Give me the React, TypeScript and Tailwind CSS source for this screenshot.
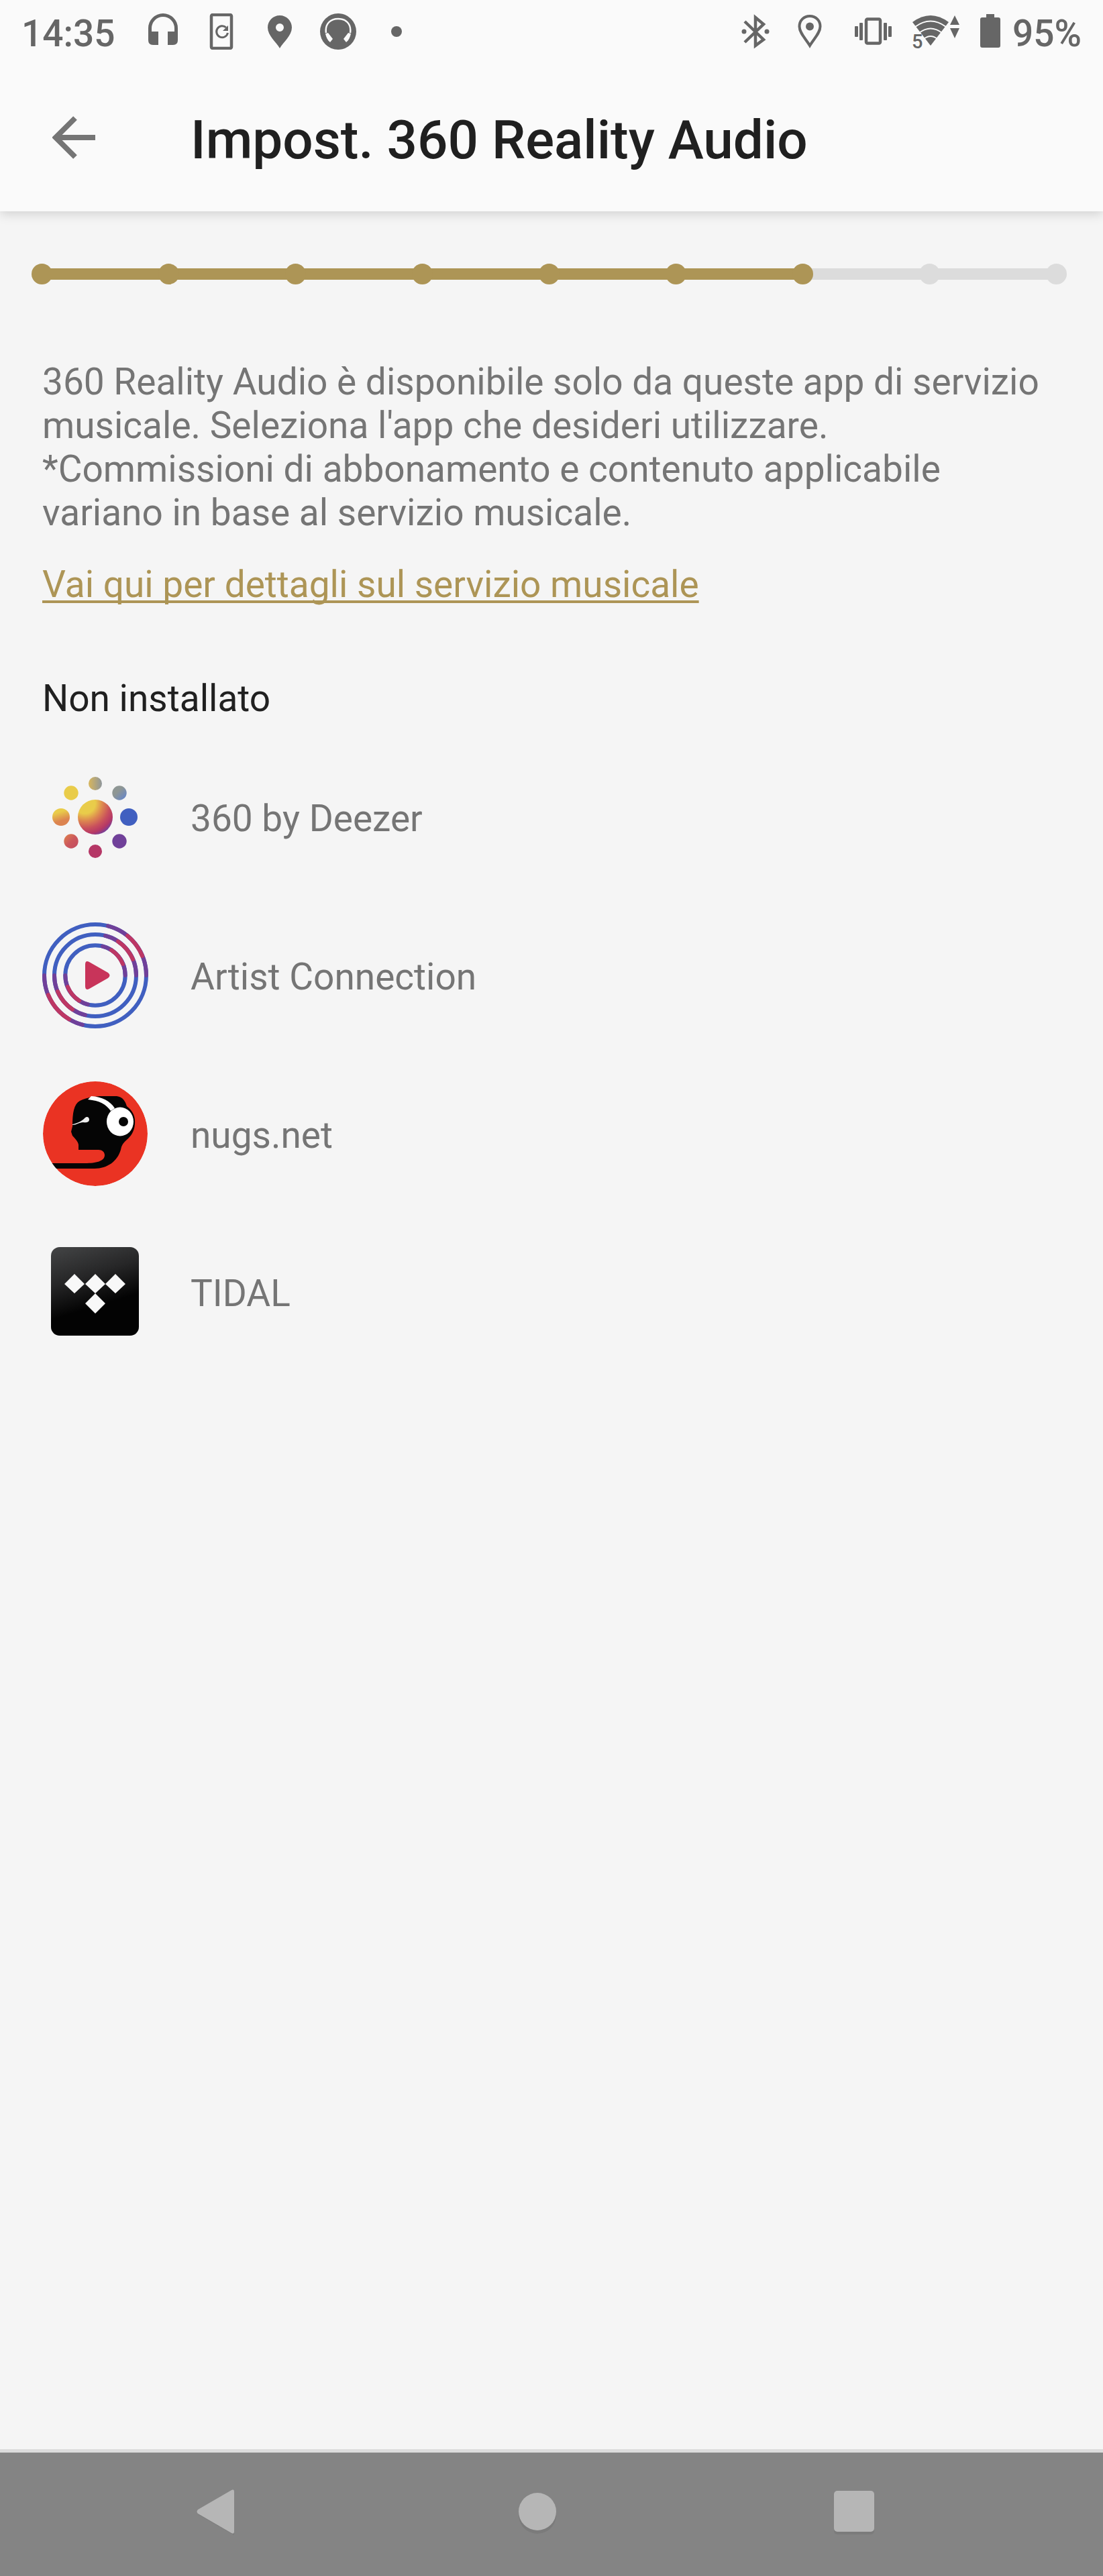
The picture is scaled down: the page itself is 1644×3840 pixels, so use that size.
import type { ReactNode } from "react";

const TOTAL_STEPS = 9;
const CURRENT_STEP = 7;

function BackArrow() {
    return (
        <svg viewBox="0 0 64 64" className="size-16" fill="none" stroke="#757575" strokeWidth="8">
            <path d="M64 32H6M34 3L5 32l29 29" />
        </svg>
    );
}

function StatusBar() {
    return (
        <div className="flex h-[94px] items-center justify-between px-8 text-[#666666]">
            <div className="flex items-center gap-8">
                <span className="w-[152px] pt-1.5 leading-none font-medium">14:35</span>
                <div className="flex items-center gap-[33px]">
                    <svg viewBox="0 0 54 54" className="size-[54px]" fill="currentColor">
                        <path d="M5 22a22 22 0 0 1 44 0v18q0 7-7 7h-8V27h10v-5a17 17 0 0 0-34 0v5h10v20h-8q-7 0-7-7z" />
                    </svg>
                    <svg viewBox="0 0 54 54" className="size-[54px]" fill="none" stroke="currentColor">
                        <rect x="12" y="2" width="30" height="50" rx="2" strokeWidth="4.5" />
                        <path d="M34 21a8.500 8.500 0 1 0 2.500 8" strokeWidth="3" />
                        <path d="M37 18v8h-8z" fill="currentColor" stroke="none" />
                    </svg>
                    <svg viewBox="0 0 54 54" className="size-[54px]" fill="currentColor">
                        <path
                            fillRule="evenodd"
                            d="M27 3c10 0 18 8 18 18 0 12-13 22-18 31C22 43 9 33 9 21 9 11 17 3 27 3zm0 12a6 6 0 1 0 0 12 6 6 0 0 0 0-12z"
                        />
                    </svg>
                    <svg viewBox="0 0 54 54" className="size-[54px]">
                        <circle cx="27" cy="27" r="27" fill="currentColor" />
                        <path d="M9 29C7 15 16 8 27 8s20 7 18 21" fill="none" stroke="#fafafa" strokeWidth="2.500" />
                        <path d="M12 29l7 9-4 5c-4-3-6-8-7-13zM42 29l-7 9 4 5c4-3 6-8 7-13z" fill="#fafafa" />
                    </svg>
                    <svg viewBox="0 0 54 54" className="size-[54px]" fill="currentColor">
                        <circle cx="27" cy="27" r="8" />
                    </svg>
                </div>
            </div>
            <div className="flex items-center gap-4">
                <svg viewBox="0 0 58 54" className="h-[54px] w-[58px]" fill="none" stroke="currentColor" strokeWidth="4">
                    <path d="M13 12l28 27-12 9V6l12 10-28 27" strokeWidth="4.500" />
                    <circle cx="12" cy="27" r="3.500" fill="currentColor" stroke="none" />
                    <circle cx="46" cy="27" r="3.500" fill="currentColor" stroke="none" />
                </svg>
                <svg viewBox="0 0 74 54" className="h-[54px] w-[74px]">
                    <path
                        d="M36 4c9 0 15.500 6.500 15.500 15.500C51.500 29 42 38 36 48 30 38 20.500 29 20.500 19.500 20.500 10.500 27 4 36 4z"
                        fill="none"
                        stroke="currentColor"
                        strokeWidth="4"
                    />
                    <circle cx="36" cy="19.500" r="6" fill="currentColor" />
                </svg>
                <svg viewBox="0 0 80 54" className="h-[54px] w-20" fill="currentColor">
                    <rect x="30" y="8.500" width="21" height="36" rx="2" fill="none" stroke="currentColor" strokeWidth="4.500" />
                    <rect x="13" y="19" width="5" height="16" rx="1" />
                    <rect x="20" y="14" width="5" height="26" rx="1" />
                    <rect x="56" y="14" width="5" height="26" rx="1" />
                    <rect x="63" y="19" width="5" height="16" rx="1" />
                </svg>
                <svg viewBox="0 0 86 54" className="h-[54px] w-[86px] overflow-visible" fill="currentColor">
                    <path d="M3 13q27-20 54 0L30 48z" />
                    <g fill="none" stroke="#fafafa" strokeWidth="2">
                        <path d="M7 20q23-17 46 0M13 29q17-13 34 0M20 38q10-8 20 0" />
                    </g>
                    <path d="M0 30h13l6 8v16H0z" fill="#fafafa" />
                    <text x="2" y="52" fontSize="29" fontWeight="500">5</text>
                    <path d="M66 3l7 14H59zM59 22h14l-7 15z" />
                </svg>
                <svg viewBox="0 0 34 54" className="h-[54px] w-[34px]" fill="currentColor">
                    <path d="M11 1h12v5h6q3 0 3 3v39q0 3-3 3H5q-3 0-3-3V9q0-3 3-3h6z" />
                </svg>
                <span className="pt-1.5 leading-none font-medium">95%</span>
            </div>
        </div>
    );
}

function StepProgress() {
    return (
        <div
            role="progressbar"
            aria-label="Avanzamento"
            aria-valuemin={1}
            aria-valuemax={TOTAL_STEPS}
            aria-valuenow={CURRENT_STEP}
            className="flex items-center pt-[78px] pr-[58px] pl-[47px]"
        >
            {Array.from({ length: TOTAL_STEPS }, (_, i) => {
                const color = i < CURRENT_STEP ? "bg-[#ad9556]" : "bg-[#dcdcdc]";
                return (
                    <div key={i} className={i === 0 ? "flex items-center" : "flex flex-1 items-center"}>
                        {i > 0 && <div className={`-mr-1 h-[17px] flex-1 ${color}`} />}
                        <div className={`-mr-1 size-[31px] rounded-full last:relative ${color}`} />
                    </div>
                );
            })}
        </div>
    );
}

function DeezerIcon() {
    return (
        <svg viewBox="0 0 158 158" className="size-[158px] shrink-0">
            <defs>
                <radialGradient id="sun" cx="0.2" cy="0.1" r="1">
                    <stop offset="0.3" stopColor="#e9cc4a" />
                    <stop offset="0.52" stopColor="#dc8450" />
                    <stop offset="0.72" stopColor="#c9505c" />
                    <stop offset="0.88" stopColor="#b53766" />
                    <stop offset="1" stopColor="#74409a" />
                </radialGradient>
                <linearGradient id="top">
                    <stop offset="0" stopColor="#d8b65c" />
                    <stop offset="1" stopColor="#8e969c" />
                </linearGradient>
                <linearGradient id="topRight" x2="1" y2="1">
                    <stop offset="0.4" stopColor="#8e9694" />
                    <stop offset="1" stopColor="#5f83d2" />
                </linearGradient>
                <linearGradient id="left" x2="0.3" y2="1">
                    <stop offset="0.3" stopColor="#e9cc4a" />
                    <stop offset="0.8" stopColor="#dc8450" />
                </linearGradient>
                <linearGradient id="bottomLeft" x2="1" y2="1">
                    <stop offset="0.1" stopColor="#dc7c50" />
                    <stop offset="0.5" stopColor="#cc585c" />
                    <stop offset="1" stopColor="#c24c62" />
                </linearGradient>
            </defs>
            <circle cx="79" cy="79" r="26" fill="url(#sun)" />
            <circle cx="79" cy="29" r="10" fill="url(#top)" />
            <circle cx="115" cy="43" r="10.700" fill="url(#topRight)" />
            <circle cx="129" cy="79" r="13" fill="#405fc0" />
            <circle cx="115" cy="115" r="10.700" fill="#704099" />
            <circle cx="79" cy="130" r="10" fill="#b53766" />
            <circle cx="43" cy="115" r="10.700" fill="url(#bottomLeft)" />
            <circle cx="28" cy="79" r="13" fill="url(#left)" />
            <circle cx="43" cy="43" r="10.700" fill="#e9cc4a" />
        </svg>
    );
}

function ArtistConnectionIcon() {
    return (
        <svg viewBox="0 0 158 158" className="size-[158px] shrink-0">
            <g fill="none" stroke="#405fc0" strokeWidth="6">
                <circle cx="79" cy="79" r="76" />
                <circle cx="79" cy="79" r="61" />
                <circle cx="79" cy="79" r="44.700" />
            </g>
            <g fill="none" strokeWidth="6" strokeLinecap="round" stroke="#704099">
                <path d="M98 5.400A76 76 0 0 1 155 79M60 152.600A76 76 0 0 1 3 79" />
                <path d="M94 19.900A61 61 0 0 1 140 79M64 138.100A61 61 0 0 1 18 79" />
                <path d="M90 35.700A44.700 44.700 0 0 1 123.700 79M68 122.300A44.700 44.700 0 0 1 34.300 79" />
            </g>
            <g fill="none" strokeWidth="6" strokeLinecap="round" stroke="#bd3764">
                <path d="M127 20A76 76 0 0 1 149 50M40 144.300A76 76 0 0 1 9 108" />
                <path d="M113 28.400A61 61 0 0 1 135 55M45 129.700A61 61 0 0 1 23 103" />
                <path d="M103 41.300A44.700 44.700 0 0 1 120 62M55 116.700A44.700 44.700 0 0 1 38 96" />
            </g>
            <path d="M64 63v32q0 7 6 4l28-16q5-4 0-8L70 59q-6-3-6 4z" fill="#c8345a" />
        </svg>
    );
}

function NugsIcon() {
    return (
        <svg viewBox="0 0 158 158" className="size-[158px] shrink-0">
            <clipPath id="disc">
                <circle cx="79" cy="79" r="78" />
            </clipPath>
            <g clipPath="url(#disc)">
                <circle cx="79" cy="79" r="78" fill="#ea3323" />
                <path d="M14 123h50c16 0 29-3 29-12 0-5-4-8-9-8H54v-5c1-5-4-11-9-16l-2-6 2-8c0-20 2-33 11-38 12-6 24-7 35-7h20c9 1 13 8 15 15 10 8 13 16 12 27-1 11-6 18-12 23-8 7-8 11-9 15-5 17-20 28-39 28H14z" fill="#050505" />
                <path d="M45 65c9-2 14-5 18-9 4-4 7-1 7 2 0 4-5 5-9 4-6 0-10 4-16 4z" fill="#eeeeee" />
                <path d="M68 28l5-5c16 1 28 7 35 18l-6 4c-7-10-16-15-34-17z" fill="#ffffff" />
                <ellipse cx="116" cy="61" rx="20" ry="21.500" fill="#ffffff" />
                <circle cx="121" cy="61" r="7" fill="#050505" />
            </g>
        </svg>
    );
}

function TidalIcon() {
    return (
        <svg viewBox="0 0 158 158" className="size-[158px] shrink-0">
            <defs>
                <linearGradient id="tile" x1="0.2" y1="0" x2="0.5" y2="1">
                    <stop offset="0" stopColor="#404142" />
                    <stop offset="0.35" stopColor="#262627" />
                    <stop offset="0.7" stopColor="#030303" />
                </linearGradient>
            </defs>
            <rect x="13" y="12" width="131" height="132" rx="13" fill="url(#tile)" />
            <path
                d="M48 52l15 15-15 14-15-14zM79 52l15 15-15 14-15-14zM109 52l15 15-15 14-15-14zM79 81l15 15-15 15-15-15z"
                fill="#f8f8f8"
            />
        </svg>
    );
}

const services: { name: string; icon: ReactNode }[] = [
    { name: "360 by Deezer", icon: <DeezerIcon /> },
    { name: "Artist Connection", icon: <ArtistConnectionIcon /> },
    { name: "nugs.net", icon: <NugsIcon /> },
    { name: "TIDAL", icon: <TidalIcon /> },
];

function NavBar() {
    return (
        <nav className="flex h-[189px] items-center justify-between border-t-[5px] border-[#dcdcdc] bg-[#848484] pr-[341px] pb-2 pl-[292px] text-[#b6b6b6]">
            <button aria-label="Indietro">
                <svg viewBox="0 0 60 70" className="h-[70px] w-[60px]">
                    <path d="M57 8v62L3 39z" fill="#7b7b7b" />
                    <path d="M53 3q4-2 4 2v60q0 4-4 2L3 38q-3-3 0-6z" fill="currentColor" />
                </svg>
            </button>
            <button aria-label="Home">
                <svg viewBox="0 0 60 70" className="h-[70px] w-[60px] overflow-visible">
                    <circle cx="33" cy="40" r="28" fill="#7b7b7b" />
                    <circle cx="33" cy="35" r="28" fill="currentColor" />
                </svg>
            </button>
            <button aria-label="App recenti">
                <svg viewBox="0 0 60 70" className="h-[70px] w-[60px]">
                    <rect y="9" width="60" height="60" rx="5" fill="#7b7b7b" />
                    <rect y="4" width="60" height="61" rx="5" fill="currentColor" />
                </svg>
            </button>
        </nav>
    );
}

export default function App() {
    return (
        <div className="flex min-h-screen flex-col bg-[#f5f5f5] font-[Roboto,sans-serif] text-[55px] leading-[65px] text-[#757575]">
            <header className="bg-[#fafafa] shadow-[0_4px_16px_rgba(0,0,0,0.15)]">
                <StatusBar />
                <div className="flex h-[221px] items-center gap-[142px] pl-[78px]">
                    <button aria-label="Indietro">
                        <BackArrow />
                    </button>
                    <h1 className="pt-2 text-[80px] leading-none font-medium text-[#202020]">Impost. 360 Reality Audio</h1>
                </div>
            </header>

            <main className="flex-1">
                <StepProgress />
                <div className="px-[63px] pt-[113px]">
                    <p>
                        360 Reality Audio è disponibile solo da queste app di servizio musicale. Seleziona l'app che desideri
                        utilizzare.
                        <br />
                        *Commissioni di abbonamento e contenuto applicabile variano in base al servizio musicale.
                    </p>
                    <p className="mt-[42px]">
                        <a
                            href="#"
                            className="text-[#ad9556] underline decoration-[4px] underline-offset-[5px] [text-decoration-skip-ink:none]"
                        >
                            Vai qui per dettagli sul servizio musicale
                        </a>
                    </p>
                    <h2 className="mt-[105px] text-[#202020]">Non installato</h2>
                    <ul className="mt-[65px] flex flex-col gap-[78px]">
                        {services.map((service) => (
                            <li key={service.name}>
                                <button className="flex w-full items-center gap-[63px] text-left">
                                    {service.icon}
                                    <span className="pt-1">{service.name}</span>
                                </button>
                            </li>
                        ))}
                    </ul>
                </div>
            </main>

            <NavBar />
        </div>
    );
}
